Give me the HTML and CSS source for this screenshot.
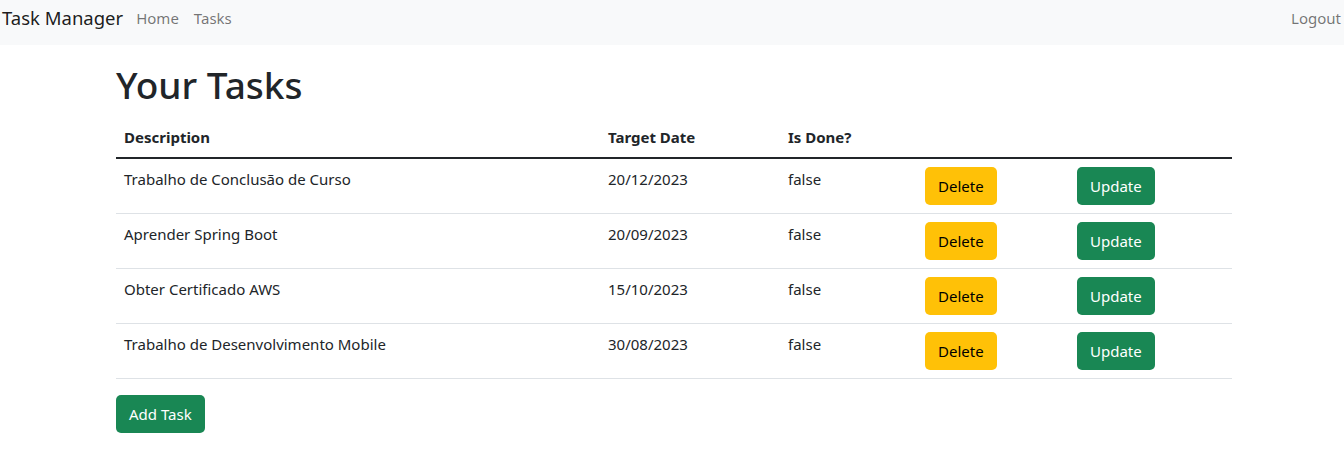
FILE: index.html
```html
<!DOCTYPE html>
<html lang="pt">
<head>
<meta charset="utf-8">
<title>Task Manager</title>
<link rel="stylesheet" href="styles.css">
</head>
<body>
<nav class="navbar">
  <div class="nav-left">
    <a class="brand" href="#">Task Manager</a>
    <a class="nav-link" href="#">Home</a>
    <a class="nav-link" href="#">Tasks</a>
  </div>
  <a class="nav-link logout" href="#">Logout</a>
</nav>
<main class="container">
  <h1 class="title">Your Tasks</h1>
  <table class="tasks">
    <colgroup>
      <col class="c-desc"><col class="c-date"><col class="c-done"><col class="c-del"><col class="c-upd">
    </colgroup>
    <thead>
      <tr><th>Description</th><th>Target Date</th><th>Is Done?</th><th></th><th></th></tr>
    </thead>
    <tbody>
      <tr><td>Trabalho de Conclusão de Curso</td><td>20/12/2023</td><td>false</td><td><button class="btn btn-warning">Delete</button></td><td><button class="btn btn-success">Update</button></td></tr>
      <tr><td>Aprender Spring Boot</td><td>20/09/2023</td><td>false</td><td><button class="btn btn-warning">Delete</button></td><td><button class="btn btn-success">Update</button></td></tr>
      <tr><td>Obter Certificado AWS</td><td>15/10/2023</td><td>false</td><td><button class="btn btn-warning">Delete</button></td><td><button class="btn btn-success">Update</button></td></tr>
      <tr><td>Trabalho de Desenvolvimento Mobile</td><td>30/08/2023</td><td>false</td><td><button class="btn btn-warning">Delete</button></td><td><button class="btn btn-success">Update</button></td></tr>
    </tbody>
  </table>
  <button class="btn btn-success">Add Task</button>
</main>
</body>
</html>
```
FILE: styles.css
```css
* { box-sizing: border-box; }
body {
  margin: 0;
  font-family: "Noto Sans", "Open Sans", sans-serif;
  font-size: 15px;
  line-height: 24px;
  color: #212529;
  background: #fff;
}
a { text-decoration: none; }
.navbar {
  display: flex;
  justify-content: space-between;
  align-items: flex-start;
  height: 45px;
  background: #f8f9fa;
  padding: 0 3px 0 2px;
}
.nav-left { display: flex; align-items: flex-start; }
.brand {
  font-size: 18.5px;
  color: rgba(0,0,0,.9);
  margin-right: 13px;
  line-height: 30px;
  margin-top: 3px;
}
.nav-link {
  color: rgba(0,0,0,.55);
  margin-right: 15px;
  line-height: 24px;
  margin-top: 6px;
}
.logout { margin-right: 0; }
.container {
  width: 1116px;
  margin-left: calc(50% - 556px);
  padding-top: 16px;
}
.title {
  margin: 0 0 8px;
  font-size: 37px;
  font-weight: 500;
  line-height: 48px;
}
.tasks {
  width: 100%;
  border-collapse: collapse;
  margin-bottom: 16px;
}
.c-desc { width: 484px; }
.c-date { width: 180px; }
.c-done { width: 137px; }
.c-del { width: 152px; }
.c-upd { width: 163px; }
.tasks th, .tasks td {
  text-align: left;
  vertical-align: top;
  padding: 8px;
}
.tasks th {
  font-weight: 700;
  border-bottom: 2px solid #212529;
}
.tasks td { border-bottom: 1px solid #dee2e6; }
.btn {
  font-family: inherit;
  font-size: 15px;
  line-height: 24px;
  padding: 6px 12px;
  border: 1px solid transparent;
  border-radius: 5px;
  cursor: pointer;
}
.btn-warning { background: #ffc107; color: #000; }
.btn-success { background: #198754; color: #fff; }
```
